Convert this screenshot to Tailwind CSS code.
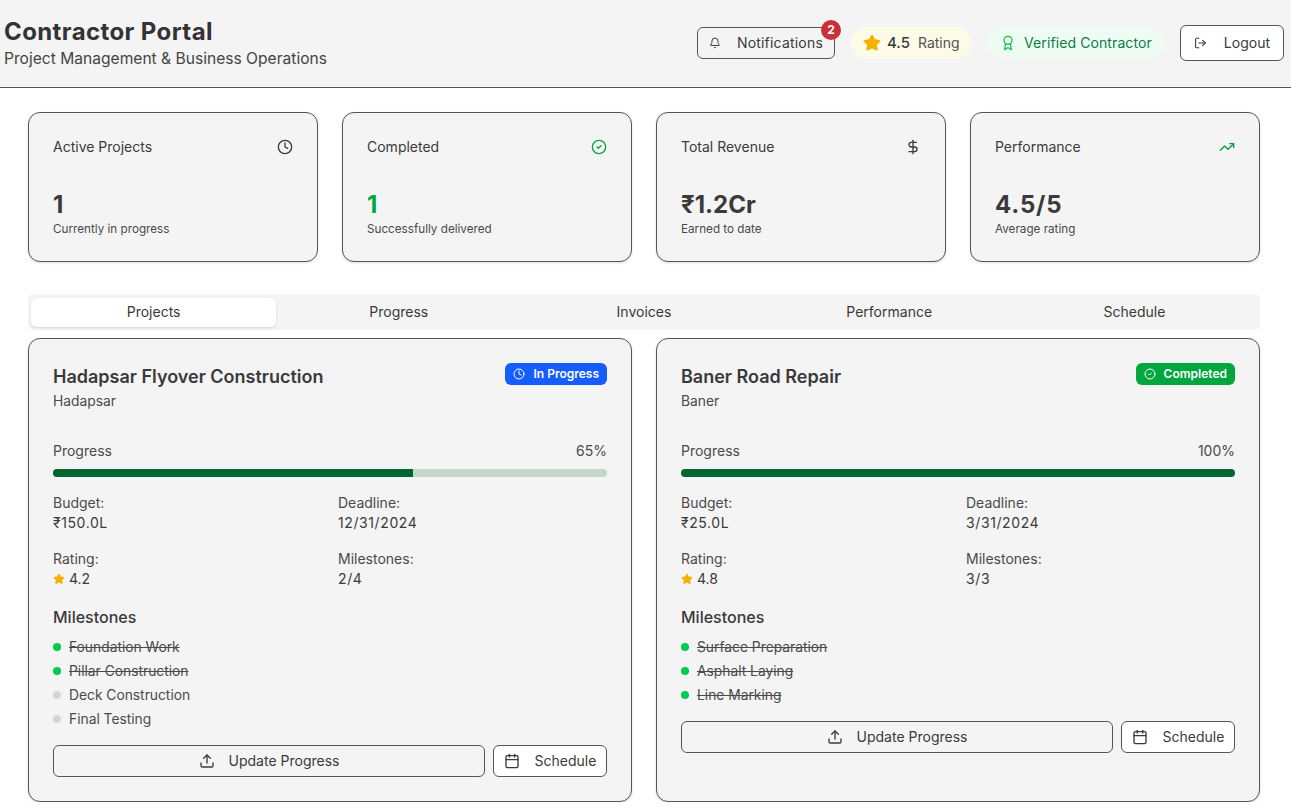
<!doctype html>
<html lang="en">
    <head>
        <meta charset="UTF-8">
        <title>Contractor Portal</title>
        <script src="https://cdn.jsdelivr.net/npm/@tailwindcss/browser@4"></script>
    </head>
    <body class="bg-white text-[#3a3a3a] [font-family:Inter,sans-serif]">

        <!-- HEADER -->
        <header class="h-[88px] bg-[#f4f4f4] border-b border-[#555] pl-1 pr-[7px] flex justify-between items-center">
            <div>
                <h1 class="text-2xl leading-8 font-bold tracking-[0.4px] text-[#333]">Contractor Portal</h1>
                <p class="-mt-[1px] text-[15.6px] leading-6 text-[#444]">Project Management &amp; Business Operations</p>
            </div>

            <div class="flex items-center gap-4 pb-[1px]">

                <!-- NOTIFICATIONS -->
                <button class="relative h-8 w-[138px] flex items-center gap-4 px-[11px] rounded-md border border-[#555] text-sm tracking-[0.2px]">
                    <svg class="w-4 h-4" viewBox="0 0 24 24" fill="none" stroke="currentColor" stroke-width="2" stroke-linecap="round" stroke-linejoin="round"><path d="M10.268 21a2 2 0 0 0 3.464 0"/><path d="M3.262 15.326A1 1 0 0 0 4 17h16a1 1 0 0 0 .74-1.673C19.41 13.956 18 12.499 18 8A6 6 0 0 0 6 8c0 4.499-1.411 5.956-2.738 7.326"/></svg>
                    Notifications
                    <span class="absolute -top-[8px] -right-[7px] w-[20px] h-[20px] rounded-full bg-[#c9303a] text-white text-xs font-bold tracking-normal flex items-center justify-center">2</span>
                </button>

                <!-- RATING -->
                <div class="h-8 w-[121px] rounded-full bg-[#fefae8] flex items-center px-3 gap-2">
                    <svg class="w-[18px] h-[18px] -mr-[2px] text-[#f5b000]" viewBox="0 0 24 24" fill="currentColor" stroke="currentColor" stroke-width="2" stroke-linecap="round" stroke-linejoin="round"><path d="M11.525 2.295a.53.53 0 0 1 .95 0l2.31 4.679a2.123 2.123 0 0 0 1.595 1.16l5.166.756a.53.53 0 0 1 .294.904l-3.736 3.638a2.123 2.123 0 0 0-.611 1.878l.882 5.14a.53.53 0 0 1-.771.56l-4.618-2.428a2.122 2.122 0 0 0-1.973 0L6.396 21.01a.53.53 0 0 1-.77-.56l.881-5.139a2.122 2.122 0 0 0-.611-1.879L2.16 9.795a.53.53 0 0 1 .294-.906l5.165-.755a2.122 2.122 0 0 0 1.597-1.16z"/></svg>
                    <span class="text-[15px] font-medium">4.5</span>
                    <span class="text-sm text-[#555]">Rating</span>
                </div>

                <!-- VERIFIED -->
                <div class="h-[30px] w-[176px] rounded-full bg-[#effcf3] flex items-center px-3 gap-2 text-sm whitespace-nowrap tracking-[0.1px] text-[#0a7d4a]">
                    <svg class="w-4 h-4 shrink-0 text-[#16c454]" viewBox="0 0 24 24" fill="none" stroke="currentColor" stroke-width="2" stroke-linecap="round" stroke-linejoin="round"><path d="m15.477 12.89 1.515 8.526a.5.5 0 0 1-.81.47l-3.58-2.687a1 1 0 0 0-1.197 0l-3.586 2.686a.5.5 0 0 1-.81-.469l1.514-8.526"/><circle cx="12" cy="8" r="6"/></svg>
                    Verified Contractor
                </div>

                <!-- LOGOUT -->
                <button class="h-9 w-[104px] flex items-center gap-[17px] px-[13px] rounded-md border border-[#555] bg-white text-sm">
                    <svg class="w-4 h-4" viewBox="0 0 24 24" fill="none" stroke="currentColor" stroke-width="2" stroke-linecap="round" stroke-linejoin="round"><path d="M9 21H5a2 2 0 0 1-2-2V5a2 2 0 0 1 2-2h4"/><polyline points="16 17 21 12 16 7"/><line x1="21" x2="9" y1="12" y2="12"/></svg>
                    Logout
                </button>
            </div>
        </header>

        <main class="pl-7 pr-[31px] pt-6">

            <!-- STATS -->
            <div class="grid grid-cols-4 gap-6">

                <div class="h-[150px] rounded-xl border border-[#555] bg-[#f4f4f4] shadow-sm px-6 pt-6">
                    <div class="flex justify-between items-center h-5 text-sm">
                        Active Projects
                        <svg class="w-4 h-4" viewBox="0 0 24 24" fill="none" stroke="currentColor" stroke-width="2" stroke-linecap="round" stroke-linejoin="round"><circle cx="12" cy="12" r="10"/><polyline points="12 6 12 12 16 14"/></svg>
                    </div>
                    <div class="mt-8 text-2xl leading-8 font-bold">1</div>
                    <div class="text-[11.7px] leading-4 text-[#4a4a4a]">Currently in progress</div>
                </div>

                <div class="h-[150px] rounded-xl border border-[#555] bg-[#f4f4f4] shadow-sm px-6 pt-6">
                    <div class="flex justify-between items-center h-5 text-sm">
                        Completed
                        <svg class="w-4 h-4 text-[#00a63e]" viewBox="0 0 24 24" fill="none" stroke="currentColor" stroke-width="2" stroke-linecap="round" stroke-linejoin="round"><circle cx="12" cy="12" r="10"/><path d="m9 12 2 2 4-4"/></svg>
                    </div>
                    <div class="mt-8 text-2xl leading-8 font-bold text-[#00a63e]">1</div>
                    <div class="text-[11.7px] leading-4 text-[#4a4a4a]">Successfully delivered</div>
                </div>

                <div class="h-[150px] rounded-xl border border-[#555] bg-[#f4f4f4] shadow-sm px-6 pt-6">
                    <div class="flex justify-between items-center h-5 text-sm">
                        Total Revenue
                        <svg class="w-4 h-4" viewBox="0 0 24 24" fill="none" stroke="currentColor" stroke-width="2" stroke-linecap="round" stroke-linejoin="round"><line x1="12" x2="12" y1="2" y2="22"/><path d="M17 5H9.5a3.5 3.5 0 0 0 0 7h5a3.5 3.5 0 0 1 0 7H6"/></svg>
                    </div>
                    <div class="mt-8 text-2xl leading-8 font-bold">₹1.2Cr</div>
                    <div class="text-[11.7px] leading-4 text-[#4a4a4a]">Earned to date</div>
                </div>

                <div class="h-[150px] rounded-xl border border-[#555] bg-[#f4f4f4] shadow-sm px-6 pt-6">
                    <div class="flex justify-between items-center h-5 text-sm">
                        Performance
                        <svg class="w-4 h-4 text-[#00a63e]" viewBox="0 0 24 24" fill="none" stroke="currentColor" stroke-width="2" stroke-linecap="round" stroke-linejoin="round"><polyline points="22 7 13.5 15.5 8.5 10.5 2 17"/><polyline points="16 7 22 7 22 13"/></svg>
                    </div>
                    <div class="mt-8 text-2xl leading-8 font-bold tracking-[0.8px]">4.5/5</div>
                    <div class="text-[11.7px] leading-4 text-[#4a4a4a]">Average rating</div>
                </div>
            </div>

            <!-- TABS -->
            <div class="mt-8 h-9 rounded-md bg-[#f4f4f4] grid grid-cols-5 p-[3px] text-sm">
                <div class="mt-[1px] pb-[1px] rounded-md bg-white shadow-sm flex items-center justify-center">Projects</div>
                <div class="flex items-center justify-center">Progress</div>
                <div class="flex items-center justify-center">Invoices</div>
                <div class="flex items-center justify-center">Performance</div>
                <div class="flex items-center justify-center">Schedule</div>
            </div>

            <!-- PROJECTS -->
            <div class="mt-2 grid grid-cols-2 gap-6">

                <!-- HADAPSAR -->
                <div class="rounded-xl border border-[#555] bg-[#f4f4f4] shadow-sm px-6 pt-6 pb-6">
                    <div class="flex justify-between items-start">
                        <div>
                            <h3 class="text-lg leading-7 font-semibold">Hadapsar Flyover Construction</h3>
                            <p class="text-[13.8px] leading-5 text-[#4a4a4a]">Hadapsar</p>
                        </div>
                        <span class="h-[22px] flex items-center gap-2 px-2 rounded-md bg-[#155dfc] text-white text-xs font-semibold">
                            <svg class="w-3 h-3" viewBox="0 0 24 24" fill="none" stroke="currentColor" stroke-width="2" stroke-linecap="round" stroke-linejoin="round"><circle cx="12" cy="12" r="10"/><polyline points="12 6 12 12 16 14"/></svg>
                            In Progress
                        </span>
                    </div>

                    <div class="mt-[30px] flex justify-between text-sm leading-5 text-[#4a4a4a]"><span>Progress</span><span>65%</span></div>
                    <div class="mt-2 h-2 rounded-full bg-[#c3d8cb] overflow-hidden"><div class="h-full bg-[#016630]" style="width: 65%"></div></div>

                    <div class="mt-4 grid grid-cols-2 gap-x-4 gap-y-4 text-sm leading-5">
                        <div><div class="text-[#4a4a4a]">Budget:</div><div class="tracking-[0.6px]">₹150.0L</div></div>
                        <div><div class="text-[#4a4a4a]">Deadline:</div><div class="tracking-[0.6px]">12/31/2024</div></div>
                        <div>
                            <div class="text-[#4a4a4a]">Rating:</div>
                            <div class="flex items-center gap-1">
                                <svg class="w-3 h-3 text-[#f5b000]" viewBox="0 0 24 24" fill="currentColor" stroke="currentColor" stroke-width="2" stroke-linecap="round" stroke-linejoin="round"><path d="M11.525 2.295a.53.53 0 0 1 .95 0l2.31 4.679a2.123 2.123 0 0 0 1.595 1.16l5.166.756a.53.53 0 0 1 .294.904l-3.736 3.638a2.123 2.123 0 0 0-.611 1.878l.882 5.14a.53.53 0 0 1-.771.56l-4.618-2.428a2.122 2.122 0 0 0-1.973 0L6.396 21.01a.53.53 0 0 1-.77-.56l.881-5.139a2.122 2.122 0 0 0-.611-1.879L2.16 9.795a.53.53 0 0 1 .294-.906l5.165-.755a2.122 2.122 0 0 0 1.597-1.16z"/></svg>
                                4.2
                            </div>
                        </div>
                        <div><div class="text-[#4a4a4a]">Milestones:</div><div class="tracking-[0.6px]">2/4</div></div>
                    </div>

                    <h4 class="mt-4 text-base leading-6 font-medium">Milestones</h4>
                    <ul class="mt-[6px] text-[13.8px] leading-6 text-[#4a4a4a]">
                        <li class="flex items-center gap-2"><span class="w-2 h-2 rounded-full bg-[#00c950]"></span><span class="line-through">Foundation Work</span></li>
                        <li class="flex items-center gap-2"><span class="w-2 h-2 rounded-full bg-[#00c950]"></span><span class="line-through">Pillar Construction</span></li>
                        <li class="flex items-center gap-2"><span class="w-2 h-2 rounded-full bg-[#d1d5dc]"></span><span>Deck Construction</span></li>
                        <li class="flex items-center gap-2"><span class="w-2 h-2 rounded-full bg-[#d1d5dc]"></span><span>Final Testing</span></li>
                    </ul>

                    <div class="mt-[14px] flex gap-2">
                        <button class="flex-1 h-8 rounded-md border border-[#555] flex items-center justify-center gap-[14px] text-sm">
                            <svg class="w-4 h-4" viewBox="0 0 24 24" fill="none" stroke="currentColor" stroke-width="2" stroke-linecap="round" stroke-linejoin="round"><path d="M21 15v4a2 2 0 0 1-2 2H5a2 2 0 0 1-2-2v-4"/><polyline points="17 8 12 3 7 8"/><line x1="12" x2="12" y1="3" y2="15"/></svg>
                            Update Progress
                        </button>
                        <button class="w-[114px] h-8 rounded-md border border-[#555] bg-white flex items-center justify-center gap-[15px] text-sm">
                            <svg class="w-4 h-4" viewBox="0 0 24 24" fill="none" stroke="currentColor" stroke-width="2" stroke-linecap="round" stroke-linejoin="round"><path d="M8 2v4"/><path d="M16 2v4"/><rect width="18" height="18" x="3" y="4" rx="2"/><path d="M3 10h18"/></svg>
                            Schedule
                        </button>
                    </div>
                </div>

                <!-- BANER -->
                <div class="rounded-xl border border-[#555] bg-[#f4f4f4] shadow-sm px-6 pt-6 pb-6">
                    <div class="flex justify-between items-start">
                        <div>
                            <h3 class="text-lg leading-7 font-semibold">Baner Road Repair</h3>
                            <p class="text-[13.8px] leading-5 text-[#4a4a4a]">Baner</p>
                        </div>
                        <span class="h-[22px] flex items-center gap-2 px-2 rounded-md bg-[#00a63e] text-white text-xs font-semibold">
                            <svg class="w-3 h-3" viewBox="0 0 24 24" fill="none" stroke="currentColor" stroke-width="2" stroke-linecap="round" stroke-linejoin="round"><circle cx="12" cy="12" r="10"/><path d="m9 12 2 2 4-4"/></svg>
                            Completed
                        </span>
                    </div>

                    <div class="mt-[30px] flex justify-between text-sm leading-5 text-[#4a4a4a]"><span>Progress</span><span>100%</span></div>
                    <div class="mt-2 h-2 rounded-full bg-[#c3d8cb] overflow-hidden"><div class="h-full bg-[#016630]" style="width: 100%"></div></div>

                    <div class="mt-4 grid grid-cols-2 gap-x-4 gap-y-4 text-sm leading-5">
                        <div><div class="text-[#4a4a4a]">Budget:</div><div class="tracking-[0.6px]">₹25.0L</div></div>
                        <div><div class="text-[#4a4a4a]">Deadline:</div><div class="tracking-[0.6px]">3/31/2024</div></div>
                        <div>
                            <div class="text-[#4a4a4a]">Rating:</div>
                            <div class="flex items-center gap-1">
                                <svg class="w-3 h-3 text-[#f5b000]" viewBox="0 0 24 24" fill="currentColor" stroke="currentColor" stroke-width="2" stroke-linecap="round" stroke-linejoin="round"><path d="M11.525 2.295a.53.53 0 0 1 .95 0l2.31 4.679a2.123 2.123 0 0 0 1.595 1.16l5.166.756a.53.53 0 0 1 .294.904l-3.736 3.638a2.123 2.123 0 0 0-.611 1.878l.882 5.14a.53.53 0 0 1-.771.56l-4.618-2.428a2.122 2.122 0 0 0-1.973 0L6.396 21.01a.53.53 0 0 1-.77-.56l.881-5.139a2.122 2.122 0 0 0-.611-1.879L2.16 9.795a.53.53 0 0 1 .294-.906l5.165-.755a2.122 2.122 0 0 0 1.597-1.16z"/></svg>
                                4.8
                            </div>
                        </div>
                        <div><div class="text-[#4a4a4a]">Milestones:</div><div class="tracking-[0.6px]">3/3</div></div>
                    </div>

                    <h4 class="mt-4 text-base leading-6 font-medium">Milestones</h4>
                    <ul class="mt-[6px] text-[13.8px] leading-6 text-[#4a4a4a]">
                        <li class="flex items-center gap-2"><span class="w-2 h-2 rounded-full bg-[#00c950]"></span><span class="line-through">Surface Preparation</span></li>
                        <li class="flex items-center gap-2"><span class="w-2 h-2 rounded-full bg-[#00c950]"></span><span class="line-through">Asphalt Laying</span></li>
                        <li class="flex items-center gap-2"><span class="w-2 h-2 rounded-full bg-[#00c950]"></span><span class="line-through">Line Marking</span></li>
                    </ul>

                    <div class="mt-[14px] flex gap-2">
                        <button class="flex-1 h-8 rounded-md border border-[#555] flex items-center justify-center gap-[14px] text-sm">
                            <svg class="w-4 h-4" viewBox="0 0 24 24" fill="none" stroke="currentColor" stroke-width="2" stroke-linecap="round" stroke-linejoin="round"><path d="M21 15v4a2 2 0 0 1-2 2H5a2 2 0 0 1-2-2v-4"/><polyline points="17 8 12 3 7 8"/><line x1="12" x2="12" y1="3" y2="15"/></svg>
                            Update Progress
                        </button>
                        <button class="w-[114px] h-8 rounded-md border border-[#555] bg-white flex items-center justify-center gap-[15px] text-sm">
                            <svg class="w-4 h-4" viewBox="0 0 24 24" fill="none" stroke="currentColor" stroke-width="2" stroke-linecap="round" stroke-linejoin="round"><path d="M8 2v4"/><path d="M16 2v4"/><rect width="18" height="18" x="3" y="4" rx="2"/><path d="M3 10h18"/></svg>
                            Schedule
                        </button>
                    </div>
                </div>
            </div>
        </main>
    </body>
</html>
